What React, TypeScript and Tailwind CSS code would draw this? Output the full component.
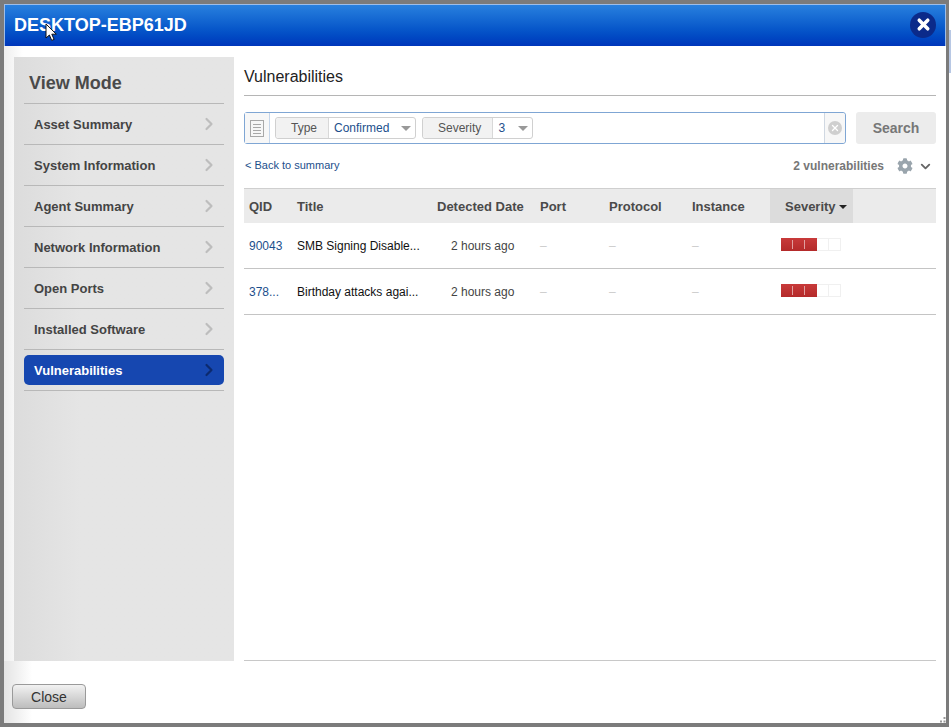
import { ChevronDown, ChevronRight, X } from "lucide-react";
import { FaCog } from "react-icons/fa";

const navItems = [
  "Asset Summary",
  "System Information",
  "Agent Summary",
  "Network Information",
  "Open Ports",
  "Installed Software",
  "Vulnerabilities",
];

const rows = [
  { qid: "90043", title: "SMB Signing Disable...", date: "2 hours ago" },
  { qid: "378...", title: "Birthday attacks agai...", date: "2 hours ago" },
];

const gridCols = "grid grid-cols-[48px_140px_103px_69px_83px_83px_83px_83px]";

function FilterPill({ label, value, valueWidth }: { label: string; value: string; valueWidth: string }) {
  return (
    <div className="flex h-[22px] items-center rounded-[3px] border border-[#d0d0d0] bg-white text-[12px]">
      <span className="flex h-full items-center rounded-l-[3px] border-r border-[#d8d8d8] bg-[#f2f2f2] pl-[15px] pr-[11px] text-[#555]">{label}</span>
      <span className={`${valueWidth} flex h-full items-center justify-between pl-[5px] pr-[4px] text-[#1c4f8c]`}>
        {value}
        <span className="h-0 w-0 border-x-[5px] border-t-[5px] border-x-transparent border-t-[#999]" />
      </span>
    </div>
  );
}

function SeverityBar() {
  return (
    <div className="mt-[-3px] flex h-[13px] w-[60px]">
      <div className="flex h-full w-[36px] bg-gradient-to-b from-[#c83a3a] to-[#b42a2a]">
        <div className="my-[2px] w-[12px] border-r border-[#e0a0a0]" />
        <div className="my-[2px] w-[12px] border-r border-[#e0a0a0]" />
      </div>
      <div className="h-full w-[12px] border-y border-r border-[#f0f0f0]" />
      <div className="h-full w-[12px] border-y border-r border-[#f0f0f0]" />
    </div>
  );
}

export default function App() {
  return (
    <div className="relative flex h-[727px] w-[951px] overflow-hidden bg-white font-['Liberation_Sans',Arial,sans-serif]">
      {/* bit of the page behind the dialog */}
      <div className="absolute right-0 top-[30px] h-[43px] w-[2px] bg-[#b8c8e4]" />

      <div className="flex h-[727px] w-[949px] flex-col border-b-[4px] border-l-[4px] border-r-[3px] border-t-[4px] border-[#7b7b7b] bg-white">
        <div className="flex h-[42px] shrink-0 items-center justify-between border-x border-t border-[#9dbde8] bg-gradient-to-b from-[#2880de] to-[#0036bb] pl-[9px] pr-[9px]">
          <span className="mt-[-1px] text-[18px] leading-5 font-bold text-white">DESKTOP-EBP61JD</span>
          <span className="mt-[-2px] flex h-[26px] w-[26px] items-center justify-center rounded-full bg-[#0b2a8a]">
            <X size={17} strokeWidth={5} className="text-white" />
          </span>
        </div>

        <div className="flex min-h-0 flex-1 bg-gradient-to-r from-[#eeeeee] via-white via-[2%] to-white pl-[10px] pt-[11px]">
          <aside className="flex h-[604px] w-[220px] shrink-0 flex-col bg-gradient-to-r from-[#dcdcdc] via-[#e5e5e5] via-[30%] to-[#e5e5e5] px-[10px]">
            <h2 className="flex h-[47px] shrink-0 items-end border-b border-[#b8b8b8] pb-[10px] pl-[5px] text-[18px] leading-5 font-bold text-[#4a4a4a]">View Mode</h2>
            {navItems.map((item) => {
              const active = item === "Vulnerabilities";
              return (
                <div key={item} className="flex h-[41px] shrink-0 items-center border-b border-[#b8b8b8]">
                  <div className={`flex h-[30px] w-full items-center justify-between rounded-[5px] pl-[10px] pr-[5px] text-[13px] font-bold ${active ? "bg-[#1647b0] text-white" : "text-[#444]"}`}>
                    <span className="pt-[1px]">{item}</span>
                    <ChevronRight size={20} strokeWidth={2.6} className={active ? "text-[#0c2a6e]" : "text-[#bdbdbd]"} />
                  </div>
                </div>
              );
            })}
          </aside>

          <main className="flex min-w-0 flex-1 flex-col">
            <div className="ml-[10px] mr-[10px] flex h-[604px] flex-col pt-[9px]">
              <h1 className="box-content h-[27px] shrink-0 border-b border-[#b5b5b5] pt-[2px] text-[16px] leading-[18px] text-[#222]">Vulnerabilities</h1>

              <div className="mt-[16px] flex h-[32px] shrink-0 gap-[10px]">
                <div className="flex w-[602px] shrink-0 items-center rounded-[3px] border border-[#7fa6d4] bg-white">
                  <span className="flex h-full w-[25px] shrink-0 items-center justify-center border-r border-[#c6d6ea] bg-[#f7f7f7]">
                    <svg width="14" height="17" viewBox="0 0 14 17" fill="none" stroke="#a8a8a8">
                      <rect x="0.5" y="0.5" width="13" height="16" />
                      <path d="M3 4.5h8M3 7.5h8M3 10.5h8M3 13.5h8" />
                    </svg>
                  </span>
                  <div className="ml-[5px] flex gap-[6px]">
                    <FilterPill label="Type" value="Confirmed" valueWidth="w-[86px]" />
                    <FilterPill label="Severity" value="3" valueWidth="w-[39px]" />
                  </div>
                  <span className="ml-auto flex h-full w-[21px] items-center justify-center rounded-r-[3px] border-l border-[#d0d8e2] bg-[#f7f7f7]">
                    <span className="flex h-[14px] w-[14px] items-center justify-center rounded-full bg-[#cfcfcf]">
                      <X size={10} strokeWidth={3} className="text-white" />
                    </span>
                  </span>
                </div>
                <button className="w-[80px] rounded-[3px] bg-[#ececec] text-[14px] font-bold text-[#777]">Search</button>
              </div>

              <div className="flex h-[44px] shrink-0 items-center justify-between">
                <a className="pb-[2px] pl-[1px] text-[11px] text-[#1c4f8c]">&lt; Back to summary</a>
                <div className="flex items-center text-[12px] font-bold text-[#777]">
                  <span>2 vulnerabilities</span>
                  <FaCog size={16} className="ml-[13px] text-[#9aa5ad]" />
                  <ChevronDown size={15} strokeWidth={3} className="ml-[5px] mr-[3px] text-[#666]" />
                </div>
              </div>

              <div className={`${gridCols} h-[35px] shrink-0 border-t border-[#cfcfcf] bg-[#ebebeb] text-[13px] font-bold text-[#4a4a4a]`}>
                <span className="flex items-center pl-[5px] pt-[1px]">QID</span>
                <span className="flex items-center pl-[5px] pt-[1px]">Title</span>
                <span className="flex items-center pl-[5px] pt-[1px]">Detected Date</span>
                <span className="flex items-center pl-[5px] pt-[1px]">Port</span>
                <span className="flex items-center pl-[5px] pt-[1px]">Protocol</span>
                <span className="flex items-center pl-[5px] pt-[1px]">Instance</span>
                <span className="flex items-center bg-[#dcdcdc] pl-[15px] pt-[1px]">
                  Severity
                  <span className="ml-[3px] h-0 w-0 border-x-[4px] border-t-[4px] border-x-transparent border-t-[#222]" />
                </span>
                <span />
              </div>

              {rows.map((row) => (
                <div key={row.qid} className={`${gridCols} h-[46px] shrink-0 border-b border-[#c4c4c4] text-[12px]`}>
                  <span className="flex items-center pl-[5px] text-[#1c4f8c]">{row.qid}</span>
                  <span className="flex items-center pl-[5px] text-[#111]">{row.title}</span>
                  <span className="flex items-center pl-[19px] text-[#444]">{row.date}</span>
                  <span className="flex items-center pl-[5px] text-[#ccc]">–</span>
                  <span className="flex items-center pl-[5px] text-[#ccc]">–</span>
                  <span className="flex items-center pl-[5px] text-[#ccc]">–</span>
                  <span className="flex items-center pl-[11px]"><SeverityBar /></span>
                  <span />
                </div>
              ))}
            </div>
            <div className="ml-[10px] mr-[10px] mt-[-1px] h-px shrink-0 bg-[#c8c8c8]" />
          </main>
        </div>

        <div className="flex h-[62px] shrink-0 items-start bg-gradient-to-r from-[#e4e4e4] via-white via-[3%] to-white pl-[8px] pt-[23px]">
          <button className="h-[25px] w-[74px] rounded-[4px] border border-[#9a9a9a] bg-gradient-to-b from-[#f2f2f2] to-[#bdbdbd] pt-[2px] text-[14px] text-[#333]">Close</button>
        </div>
      </div>

      {/* resize grip */}
      <svg className="absolute left-[940px] top-[717px]" width="6" height="6" viewBox="0 0 6 6" fill="#999">
        <rect x="3.5" y="0" width="2" height="2" />
        <rect x="0" y="3.5" width="2" height="2" />
        <rect x="3.5" y="3.5" width="2" height="2" />
      </svg>

      {/* mouse pointer captured in the screenshot */}
      <svg className="absolute left-[45px] top-[23px]" width="13" height="19" viewBox="0 0 13 19">
        <path d="M1 1v14l3.4-3 2.3 5.4 2.4-1-2.3-5.2h4.5z" fill="#fff" stroke="#111" strokeWidth="1" />
      </svg>
    </div>
  );
}
